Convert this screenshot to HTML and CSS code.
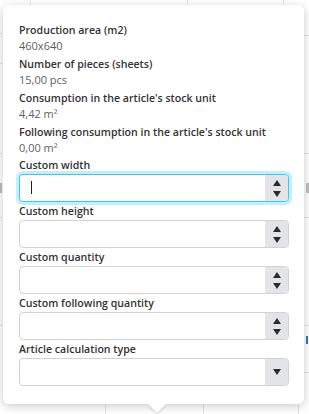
FILE: index.html
```html
<!DOCTYPE html>
<html lang="en">
  <head>
    <meta charset="UTF-8" />
    <meta name="viewport" content="width=device-width, initial-scale=1.0" />
    <title>Article consumption</title>
    <link rel="stylesheet" href="styles.css">
  </head>

  <body>
    <!-- table behind the popover -->
    <div class="backdrop"></div>

    <!-- Consumption popover -->
    <div class="popover">
      <div class="info">
        <div class="info-label">Production area (m2)</div>
        <div class="info-value">460x640</div>
      </div>
      <div class="info">
        <div class="info-label">Number of pieces (sheets)</div>
        <div class="info-value">15,00 pcs</div>
      </div>
      <div class="info">
        <div class="info-label">Consumption in the article's stock unit</div>
        <div class="info-value">4,42 m²</div>
      </div>
      <div class="info">
        <div class="info-label">Following consumption in the article's stock unit</div>
        <div class="info-value">0,00 m²</div>
      </div>

      <div class="field">
        <label class="field-label">Custom width</label>
        <div class="input focused">
          <span class="caret"></span>
          <span class="spinner"><span class="tri up"></span><span class="tri down"></span></span>
        </div>
      </div>
      <div class="field">
        <label class="field-label">Custom height</label>
        <div class="input">
          <span class="spinner"><span class="tri up"></span><span class="tri down"></span></span>
        </div>
      </div>
      <div class="field">
        <label class="field-label">Custom quantity</label>
        <div class="input">
          <span class="spinner"><span class="tri up"></span><span class="tri down"></span></span>
        </div>
      </div>
      <div class="field">
        <label class="field-label">Custom following quantity</label>
        <div class="input">
          <span class="spinner"><span class="tri up"></span><span class="tri down"></span></span>
        </div>
      </div>
      <div class="field">
        <label class="field-label">Article calculation type</label>
        <div class="input">
          <span class="spinner select"><span class="tri down"></span></span>
        </div>
      </div>
    </div>
  </body>
</html>
```

FILE: styles.css
```css
body {
  font-family: "Open Sans", "Noto Sans", sans-serif;
  margin: 0;
  padding: 0;
  background: #ffffff;
  width: 309px;
  height: 414px;
  overflow: hidden;
  position: relative;
}

.backdrop {
  width: 309px;
  height: 414px;
  background:
    linear-gradient(#e4e4e4, #e4e4e4) 30px 0 / 1px 6px no-repeat,
    linear-gradient(#e4e4e4, #e4e4e4) 187px 0 / 1px 6px no-repeat,
    linear-gradient(#e4e4e4, #e4e4e4) 283px 0 / 1px 6px no-repeat,
    linear-gradient(#e4e4e4, #e4e4e4) 105px 402px / 1px 12px no-repeat,
    linear-gradient(#e4e4e4, #e4e4e4) 203px 402px / 1px 12px no-repeat,
    linear-gradient(#e4e4e4, #e4e4e4) 298px 402px / 1px 12px no-repeat,
    linear-gradient(#e4e4e4, #e4e4e4) 0 33px / 4px 1px no-repeat,
    linear-gradient(#e4e4e4, #e4e4e4) 0 63px / 4px 1px no-repeat,
    linear-gradient(#e4e4e4, #e4e4e4) 0 153px / 4px 1px no-repeat,
    linear-gradient(#e4e4e4, #e4e4e4) 0 217px / 4px 1px no-repeat,
    linear-gradient(#e4e4e4, #e4e4e4) 0 325px / 4px 1px no-repeat,
    linear-gradient(#e4e4e4, #e4e4e4) 304px 35px / 5px 1px no-repeat,
    linear-gradient(#e4e4e4, #e4e4e4) 304px 153px / 5px 1px no-repeat,
    linear-gradient(#e4e4e4, #e4e4e4) 304px 217px / 5px 1px no-repeat,
    linear-gradient(#e4e4e4, #e4e4e4) 304px 325px / 5px 1px no-repeat,
    linear-gradient(#e4e4e4, #e4e4e4) 304px 372px / 5px 1px no-repeat,
    linear-gradient(#bdbdbd, #bdbdbd) 0 183px / 2px 10px no-repeat,
    linear-gradient(#bdbdbd, #bdbdbd) 306px 183px / 3px 10px no-repeat,
    linear-gradient(#2a7ab8, #2a7ab8) 306px 336px / 2px 8px no-repeat,
    #ffffff;
}

/* popover */
.popover {
  position: absolute;
  top: 5px;
  left: 3px;
  width: 301px;
  box-sizing: border-box;
  padding: 17px 15px 16px 16px;
  background: #ffffff;
  border-radius: 6px;
  box-shadow: 0 2px 10px rgba(0, 0, 0, 0.22);
  color: #333333;
}

.popover::after {
  content: "";
  position: absolute;
  left: 145px;
  bottom: -9px;
  width: 0;
  height: 0;
  border-left: 9px solid transparent;
  border-right: 9px solid transparent;
  border-top: 9px solid #ffffff;
  filter: drop-shadow(0 2px 1px rgba(0, 0, 0, 0.12));
}

.info {
  margin-bottom: 2px;
}

.info-label,
.field-label {
  display: block;
  font-size: 10.6px;
  font-weight: 600;
  line-height: 16px;
  color: #333333;
  white-space: nowrap;
}

.info-value {
  font-size: 11px;
  line-height: 16px;
  color: #5f5f5f;
}

.field {
  margin-top: 1px;
  margin-bottom: 2px;
}

.field-label {
  line-height: 15px;
  margin-bottom: 1px;
}

.input {
  position: relative;
  display: flex;
  justify-content: flex-end;
  align-items: stretch;
  height: 28px;
  box-sizing: border-box;
  border: 1px solid #d2d2d2;
  border-radius: 4px;
  background: #ffffff;
}

.input.focused {
  border-color: #3fc6ea;
  box-shadow: 0 0 0 3px rgba(120, 220, 245, 0.45);
}

.caret {
  position: absolute;
  left: 11px;
  top: 6px;
  width: 1px;
  height: 13px;
  background: #222222;
}

.spinner {
  width: 23px;
  background: #e3e4e8;
  border-radius: 0 3px 3px 0;
  display: flex;
  flex-direction: column;
  align-items: center;
  justify-content: center;
  gap: 5px;
}

.tri {
  width: 0;
  height: 0;
  border-left: 4px solid transparent;
  border-right: 4px solid transparent;
}

.tri.up {
  border-bottom: 6px solid #2b2b2b;
}

.tri.down {
  border-top: 6px solid #2b2b2b;
}
```
